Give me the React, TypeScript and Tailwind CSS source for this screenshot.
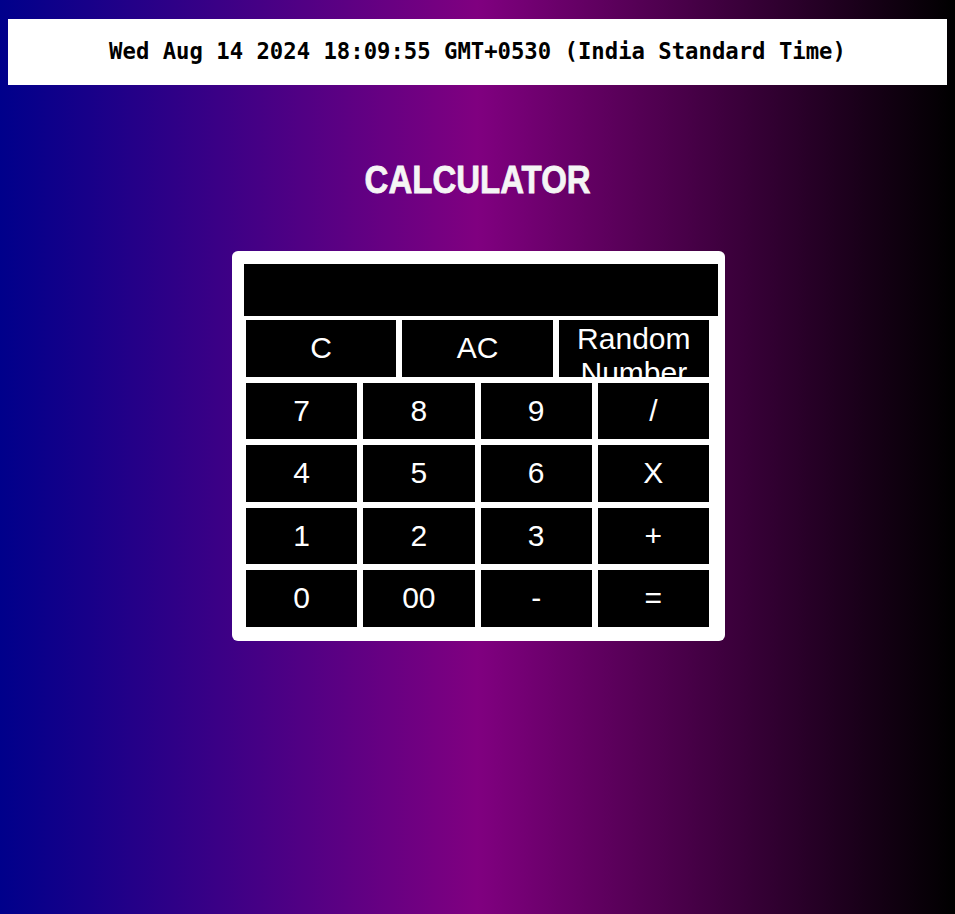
import React from "react";

const sans = { fontFamily: '"Liberation Sans", Arial, sans-serif' };

function Key({ label }: { label: string }) {
  return (
    <button
      type="button"
      className="flex h-[56.6px] items-center justify-center bg-black text-[30px] leading-[34.5px] text-white"
      style={sans}
    >
      {label}
    </button>
  );
}

export default function App() {
  const rows = [
    ["7", "8", "9", "/"],
    ["4", "5", "6", "X"],
    ["1", "2", "3", "+"],
    ["0", "00", "-", "="],
  ];
  return (
    <div className="min-h-screen bg-[linear-gradient(to_right,#00008b,#800080,#000000)] px-[8px] pt-[19px]">
      <div
        className="flex h-[66px] items-center justify-center bg-white text-[22.25px] font-bold text-black"
        style={{ fontFamily: '"DejaVu Sans Mono", "Liberation Mono", monospace' }}
      >
        Wed Aug 14 2024 18:09:55 GMT+0530 (India Standard Time)
      </div>

      <h1
        className="mt-[75px] flex h-[39px] justify-center text-[39px] font-bold leading-[39px] text-[#f5f5f5]"
        style={sans}
      >
        <span className="inline-block scale-x-[0.846] [-webkit-text-stroke:0.8px_#f5f5f5]">CALCULATOR</span>
      </h1>

      <div className="ml-[224px] mt-[52px] h-[390px] w-[493px] rounded-[6px] bg-white pt-[13px]">
        <div className="ml-[12px] h-[52px] w-[474px] bg-black" />
        <div className="ml-[14px] mt-[4px] flex w-[463px] flex-col gap-[6px]">
          <div className="grid grid-cols-3 gap-[6px]">
            <Key label="C" />
            <Key label="AC" />
            <button
              type="button"
              className="block h-[56.6px] overflow-hidden bg-black pt-[1.5px] text-center text-[30px] leading-[34.5px] text-white"
              style={sans}
            >
              Random Number
            </button>
          </div>
          {rows.map((r, i) => (
            <div key={i} className="grid grid-cols-4 gap-[6px]">
              {r.map((k) => (
                <Key key={k} label={k} />
              ))}
            </div>
          ))}
        </div>
      </div>
    </div>
  );
}
